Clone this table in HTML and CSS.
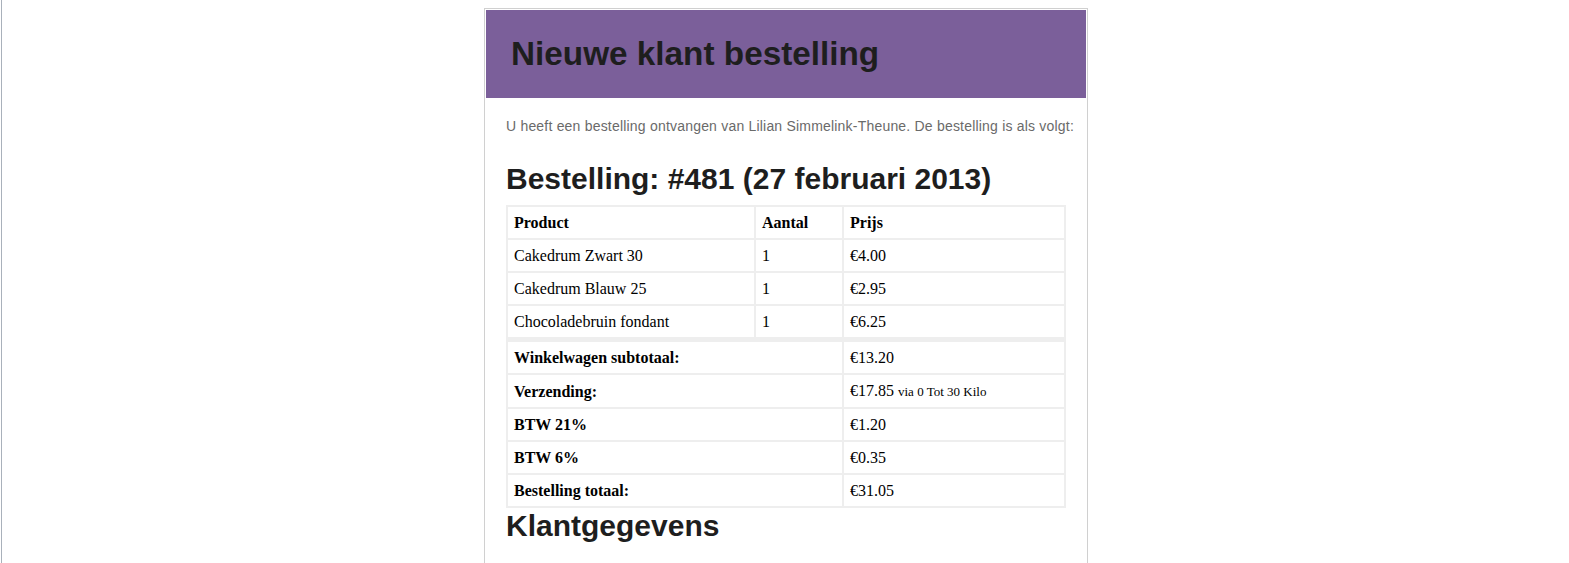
FILE: index.html
```html
<!DOCTYPE html>
<html lang="nl">
<head>
<meta charset="utf-8">
<title>Nieuwe klant bestelling</title>
<link rel="stylesheet" href="styles.css">
</head>
<body>
<div class="frame">
  <div class="mail">
    <div class="mail-header">
      <h1 class="mail-title">Nieuwe klant bestelling</h1>
    </div>
    <div class="mail-body">
      <p class="intro">U heeft een bestelling ontvangen van Lilian Simmelink-Theune. De bestelling is als volgt:</p>
      <h2 class="section-title">Bestelling: #481 (27 februari 2013)</h2>
      <table class="order">
        <colgroup>
          <col class="col-product">
          <col class="col-qty">
          <col class="col-price">
        </colgroup>
        <thead>
          <tr><th>Product</th><th>Aantal</th><th>Prijs</th></tr>
        </thead>
        <tbody>
          <tr><td>Cakedrum Zwart 30</td><td>1</td><td>€4.00</td></tr>
          <tr><td>Cakedrum Blauw 25</td><td>1</td><td>€2.95</td></tr>
          <tr><td>Chocoladebruin fondant</td><td>1</td><td>€6.25</td></tr>
        </tbody>
        <tfoot>
          <tr class="first"><th colspan="2">Winkelwagen subtotaal:</th><td>€13.20</td></tr>
          <tr><th colspan="2">Verzending:</th><td>€17.85 <small>via 0 Tot 30 Kilo</small></td></tr>
          <tr><th colspan="2">BTW 21%</th><td>€1.20</td></tr>
          <tr><th colspan="2">BTW 6%</th><td>€0.35</td></tr>
          <tr><th colspan="2">Bestelling totaal:</th><td>€31.05</td></tr>
        </tfoot>
      </table>
      <h2 class="section-title section-title--after">Klantgegevens</h2>
    </div>
  </div>
</div>
</body>
</html>
```

FILE: styles.css
```css
html, body {
  margin: 0;
  padding: 0;
  background: #ffffff;
}

.frame {
  margin-left: 1px;
  border-left: 1px solid #a9b1bb;
  padding: 8px 0 0 1px;
  min-height: 563px;
  box-sizing: border-box;
  display: flex;
  justify-content: center;
  align-items: flex-start;
}

.mail {
  width: 600px;
  padding: 1px;
  border: 1px solid #d0d0d0;
  background: #ffffff;
  min-height: 700px;
}

.mail-header {
  background: #7b5f9a;
  height: 88px;
  padding: 0 25px;
}

.mail-title {
  margin: 0;
  font-family: "Liberation Sans", Arial, sans-serif;
  font-size: 33.3px;
  font-weight: bold;
  line-height: 88px;
  color: #1e1e1e;
}

.mail-body {
  padding: 20px 20px;
}

.intro {
  margin: 0 0 28px;
  font-family: "Liberation Sans", Arial, sans-serif;
  font-size: 14px;
  letter-spacing: 0.2px;
  white-space: nowrap;
  color: #6a6a6a;
}

.section-title {
  margin: 0 0 9px;
  font-family: "Liberation Sans", Arial, sans-serif;
  font-size: 30px;
  font-weight: bold;
  color: #1e1e1e;
}

.section-title--after {
  margin-top: 1px;
}

.order {
  width: 560px;
  table-layout: fixed;
  border-collapse: separate;
  border-spacing: 0;
  border: 1px solid #eeeeee;
  font-family: "Liberation Serif", "Times New Roman", serif;
  font-size: 16px;
  line-height: 19px;
  color: #000000;
}

.col-product { width: 248px; }
.col-qty { width: 88px; }
.col-price { width: 222px; }

.order th,
.order td {
  border: 1px solid #eeeeee;
  padding: 6px;
  text-align: left;
  vertical-align: middle;
}

.order th {
  font-weight: bold;
}

.order tfoot tr.first th,
.order tfoot tr.first td {
  border-top-width: 4px;
}

.order small {
  font-size: 13px;
}
```
